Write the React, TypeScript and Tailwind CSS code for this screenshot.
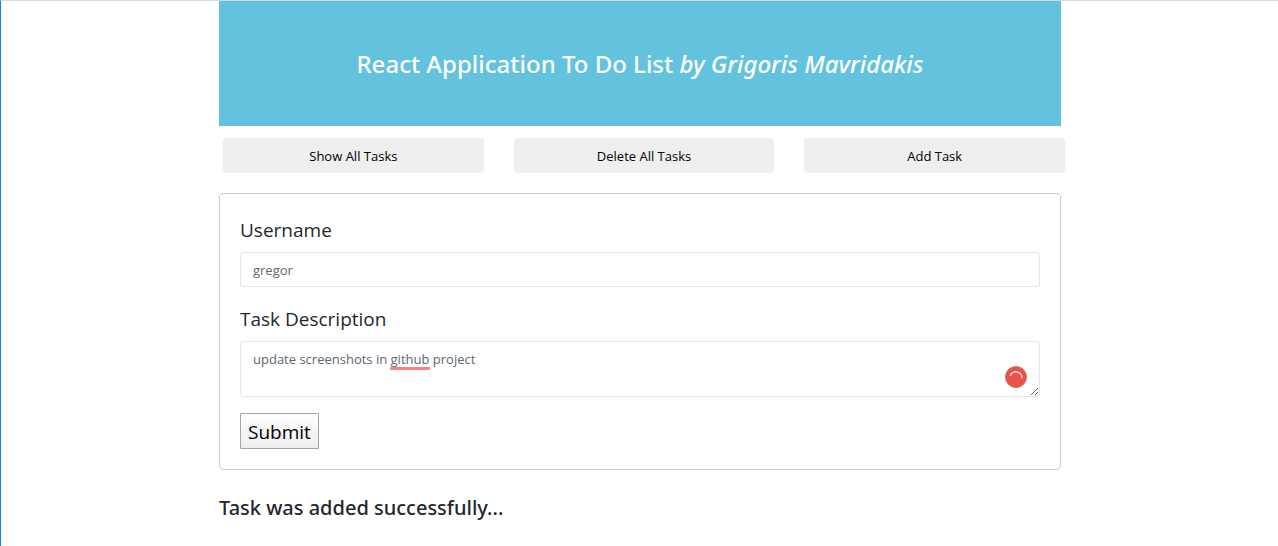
import React, { useState } from "react";

const field =
  "block w-full rounded-[3px] border border-[#e4e5e6] bg-white px-3 text-[13px] leading-5 text-[#5c6873] outline-none";
const action =
  "flex-1 rounded-[4px] bg-[#efefef] pt-[9px] pb-[7px] text-[13px] leading-[19px] text-black";
const caption = "mb-2 block pt-0.5 text-[19px] leading-7";

export default function App() {
  const [user, setUser] = useState("gregor");
  const [task, setTask] = useState("update screenshots in github project");

  return (
    <div className="min-h-screen border-t border-l border-t-[#d9d9dc] border-l-[#1883d7] bg-white pl-px font-['Open_Sans','Noto_Sans',sans-serif] text-[#23282c]">
      <main className="mx-auto w-full max-w-[842px]">
        <header className="bg-[#63c2de] px-4 py-12 text-center text-white">
          <h1 className="font-['Noto_Sans',sans-serif] text-2xl leading-[29px] font-medium">
            React Application To Do List <em>by Grigoris Mavridakis</em>
          </h1>
        </header>
        <nav className="-mr-1 ml-1 flex gap-[30px] pt-3">
          <button type="button" className={action}>Show All Tasks</button>
          <button type="button" className={action}>Delete All Tasks</button>
          <button type="button" className={action}>Add Task</button>
        </nav>
        <form
          className="mt-5 rounded-[4px] border border-[#c8ced3] p-5"
          onSubmit={(e) => e.preventDefault()}
        >
          <label htmlFor="username" className={caption}>Username</label>
          <input
            id="username"
            className={`${field} h-[35px]`}
            value={user}
            onChange={(e) => setUser(e.target.value)}
          />
          <label htmlFor="task" className={`mt-4 ${caption}`}>Task Description</label>
          <div className="relative">
            <textarea
              id="task"
              spellCheck={false}
              className={`${field} h-14 resize-y py-[7px]`}
              value={task}
              onChange={(e) => setTask(e.target.value)}
            />
            <span aria-hidden="true" className="pointer-events-none absolute top-[26px] left-[150px] h-[3px] w-10 rounded-[1px] bg-[#ff7f7f]" />
            <svg
              aria-hidden="true"
              viewBox="0 0 22 22"
              className="pointer-events-none absolute right-[13px] bottom-[9px] size-[22px]"
            >
              <circle cx="11" cy="11" r="10.6" fill="#eb5146" stroke="#b9786f" strokeWidth="0.8" />
              <path d="M5.3 10A6 6 0 0 1 16.9 12.6" fill="none" stroke="#fde0dd" strokeWidth="1.5" transform="translate(0 -0.3)" />
            </svg>
          </div>
          <button
            type="submit"
            className="mt-4 h-9 rounded-[1px] border border-[#a5a5a5] bg-linear-to-b from-[#fdfdfd] to-[#eeeeee] px-[7px] pt-0.5 text-[19px] leading-8 text-black"
          >
            Submit
          </button>
        </form>
        <p className="pt-5 font-['Noto_Sans',sans-serif] text-xl leading-9 font-medium">Task was added successfully...</p>
      </main>
    </div>
  );
}
